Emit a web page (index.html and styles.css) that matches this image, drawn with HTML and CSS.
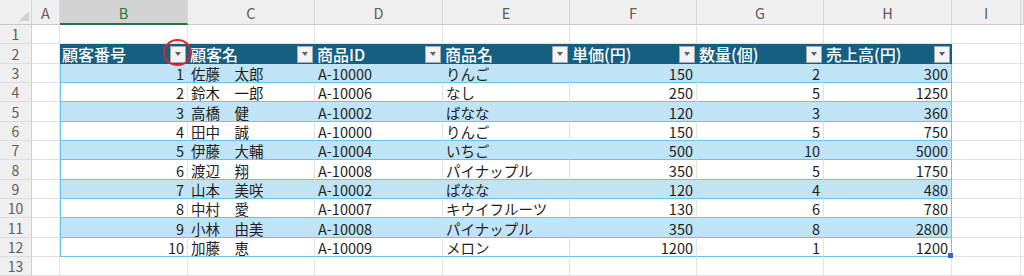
FILE: index.html
```html
<!DOCTYPE html>
<html lang="ja">
<head>
<meta charset="utf-8">
<title>Sheet</title>
<link rel="stylesheet" href="styles.css">
</head>
<body>
<div class="sheet">
  <div class="row colhead">
    <div class="corner"><span class="tri"></span></div>
    <div class="ch">A</div>
    <div class="ch sel">B</div>
    <div class="ch">C</div>
    <div class="ch">D</div>
    <div class="ch">E</div>
    <div class="ch">F</div>
    <div class="ch">G</div>
    <div class="ch">H</div>
    <div class="ch">I</div>
    <div class="ch"></div>
  </div>
  <div class="row">
    <div class="rh">1</div>
    <div class="c"></div><div class="c"></div><div class="c"></div><div class="c"></div><div class="c"></div><div class="c"></div><div class="c"></div><div class="c"></div><div class="c"></div><div class="c"></div>
  </div>
  <div class="row">
    <div class="rh">2</div>
    <div class="c"></div>
    <div class="c th"><span class="tht">顧客番号</span><span class="dd"></span></div>
    <div class="c th"><span class="tht">顧客名</span><span class="dd"></span></div>
    <div class="c th"><span class="tht">商品ID</span><span class="dd"></span></div>
    <div class="c th"><span class="tht">商品名</span><span class="dd"></span></div>
    <div class="c th"><span class="tht">単価(円)</span><span class="dd"></span></div>
    <div class="c th"><span class="tht">数量(個)</span><span class="dd"></span></div>
    <div class="c th"><span class="tht">売上高(円)</span><span class="dd"></span></div>
    <div class="c"></div><div class="c"></div>
  </div>
  <div class="row band">
    <div class="rh">3</div>
    <div class="c"></div>
    <div class="c t n tl">1</div><div class="c t">佐藤　太郎</div><div class="c t">A-10000</div><div class="c t">りんご</div><div class="c t n">150</div><div class="c t n">2</div><div class="c t n tr">300</div>
    <div class="c"></div><div class="c"></div>
  </div>
  <div class="row">
    <div class="rh">4</div>
    <div class="c"></div>
    <div class="c t n tl">2</div><div class="c t">鈴木　一郎</div><div class="c t">A-10006</div><div class="c t">なし</div><div class="c t n">250</div><div class="c t n">5</div><div class="c t n tr">1250</div>
    <div class="c"></div><div class="c"></div>
  </div>
  <div class="row band">
    <div class="rh">5</div>
    <div class="c"></div>
    <div class="c t n tl">3</div><div class="c t">高橋　健</div><div class="c t">A-10002</div><div class="c t">ばなな</div><div class="c t n">120</div><div class="c t n">3</div><div class="c t n tr">360</div>
    <div class="c"></div><div class="c"></div>
  </div>
  <div class="row">
    <div class="rh">6</div>
    <div class="c"></div>
    <div class="c t n tl">4</div><div class="c t">田中　誠</div><div class="c t">A-10000</div><div class="c t">りんご</div><div class="c t n">150</div><div class="c t n">5</div><div class="c t n tr">750</div>
    <div class="c"></div><div class="c"></div>
  </div>
  <div class="row band">
    <div class="rh">7</div>
    <div class="c"></div>
    <div class="c t n tl">5</div><div class="c t">伊藤　大輔</div><div class="c t">A-10004</div><div class="c t">いちご</div><div class="c t n">500</div><div class="c t n">10</div><div class="c t n tr">5000</div>
    <div class="c"></div><div class="c"></div>
  </div>
  <div class="row">
    <div class="rh">8</div>
    <div class="c"></div>
    <div class="c t n tl">6</div><div class="c t">渡辺　翔</div><div class="c t">A-10008</div><div class="c t">パイナップル</div><div class="c t n">350</div><div class="c t n">5</div><div class="c t n tr">1750</div>
    <div class="c"></div><div class="c"></div>
  </div>
  <div class="row band">
    <div class="rh">9</div>
    <div class="c"></div>
    <div class="c t n tl">7</div><div class="c t">山本　美咲</div><div class="c t">A-10002</div><div class="c t">ばなな</div><div class="c t n">120</div><div class="c t n">4</div><div class="c t n tr">480</div>
    <div class="c"></div><div class="c"></div>
  </div>
  <div class="row">
    <div class="rh">10</div>
    <div class="c"></div>
    <div class="c t n tl">8</div><div class="c t">中村　愛</div><div class="c t">A-10007</div><div class="c t">キウイフルーツ</div><div class="c t n">130</div><div class="c t n">6</div><div class="c t n tr">780</div>
    <div class="c"></div><div class="c"></div>
  </div>
  <div class="row band">
    <div class="rh">11</div>
    <div class="c"></div>
    <div class="c t n tl">9</div><div class="c t">小林　由美</div><div class="c t">A-10008</div><div class="c t">パイナップル</div><div class="c t n">350</div><div class="c t n">8</div><div class="c t n tr">2800</div>
    <div class="c"></div><div class="c"></div>
  </div>
  <div class="row">
    <div class="rh">12</div>
    <div class="c"></div>
    <div class="c t n tl">10</div><div class="c t">加藤　恵</div><div class="c t">A-10009</div><div class="c t">メロン</div><div class="c t n">1200</div><div class="c t n">1</div><div class="c t n tr active">1200<span class="fh"></span></div>
    <div class="c"></div><div class="c"></div>
  </div>
  <div class="row">
    <div class="rh">13</div>
    <div class="c"></div><div class="c"></div><div class="c"></div><div class="c"></div><div class="c"></div><div class="c"></div><div class="c"></div><div class="c"></div><div class="c"></div><div class="c"></div>
  </div>
  <span class="circle"></span>
</div>
</body>
</html>
```

FILE: styles.css
```css
* {
  box-sizing: border-box;
}

html, body {
  margin: 0;
  padding: 0;
  background: #ffffff;
}

body {
  font-family: "Noto Sans CJK JP", "Noto Sans", sans-serif;
  overflow: hidden;
}

.sheet {
  position: relative;
  width: 1024px;
  height: 276px;
  overflow: hidden;
}

.row {
  display: grid;
  grid-template-columns: 32px 28px 128px 127px 128px 127px 127px 127px 128px 69px 1fr;
  height: 19.35px;
}

/* column header row */
.colhead {
  height: 25px;
  background: #efefef;
}

.corner {
  display: flex;
  align-items: flex-end;
  justify-content: flex-end;
  padding: 0 2px 3px 0;
  border-right: 1px solid #d4d4d4;
  border-bottom: 1px solid #c8c8c8;
}

.tri {
  width: 0;
  height: 0;
  border-left: 10px solid transparent;
  border-bottom: 10px solid #d2d2d2;
}

.ch {
  display: flex;
  justify-content: center;
  align-items: flex-end;
  padding-bottom: 2px;
  border-right: 1px solid #d6d6d6;
  border-bottom: 1px solid #c8c8c8;
  color: #5c5c5c;
  font-size: 14.5px;
  line-height: 18px;
}

.ch.sel {
  background: #d3d3d3;
  color: #217346;
  border-bottom: 2px solid #217346;
  padding-bottom: 1px;
}

/* row headers */
.rh {
  display: flex;
  align-items: center;
  justify-content: center;
  padding-top: 1px;
  background: #efefef;
  border-right: 1px solid #cfcfcf;
  border-bottom: 1px solid #dcdcdc;
  color: #5c5c5c;
  font-size: 14px;
  line-height: 17px;
}

/* cells */
.c {
  display: flex;
  align-items: center;
  padding: 1px 3px 0 3px;
  border-right: 1px solid #e2e2e2;
  border-bottom: 1px solid #e2e2e2;
  font-size: 14.5px;
  line-height: 17px;
  color: #1e1e1e;
  white-space: nowrap;
  overflow: hidden;
}

.n {
  justify-content: flex-end;
}

.t {
  border-bottom-color: #6dc2e7;
}

.band .t {
  background: #c0e4f5;
  border-right-color: #c0e4f5;
}

.tl {
  box-shadow: inset 1px 0 0 #6dc2e7;
}

.row .tr {
  border-right-color: #6dc2e7;
}

.th {
  background: #156082;
  border-right-color: #156082;
  border-bottom-width: 0;
  color: #ffffff;
  font-size: 16px;
  font-weight: 500;
  line-height: 19px;
  padding: 0 1px 0 2px;
  overflow: visible;
}

.tht {
  display: block;
  line-height: 19px;
}

.dd {
  margin-left: auto;
  width: 16px;
  height: 17px;
  background: #f3f3f3;
  border: 1px solid #a9a9a9;
  display: flex;
  align-items: center;
  justify-content: center;
  flex: none;
}

.dd::after {
  content: "";
  width: 0;
  height: 0;
  border-left: 3.5px solid transparent;
  border-right: 3.5px solid transparent;
  border-top: 4px solid #5f5f5f;
}

.active {
  position: relative;
  overflow: visible;
}

.fh {
  position: absolute;
  right: -2px;
  bottom: -2px;
  width: 5px;
  height: 5px;
  background: #3c5fcf;
}

.circle {
  position: absolute;
  left: 163px;
  top: 39px;
  width: 29px;
  height: 27px;
  border: 2.5px solid #e3232b;
  border-radius: 50%;
}
```
